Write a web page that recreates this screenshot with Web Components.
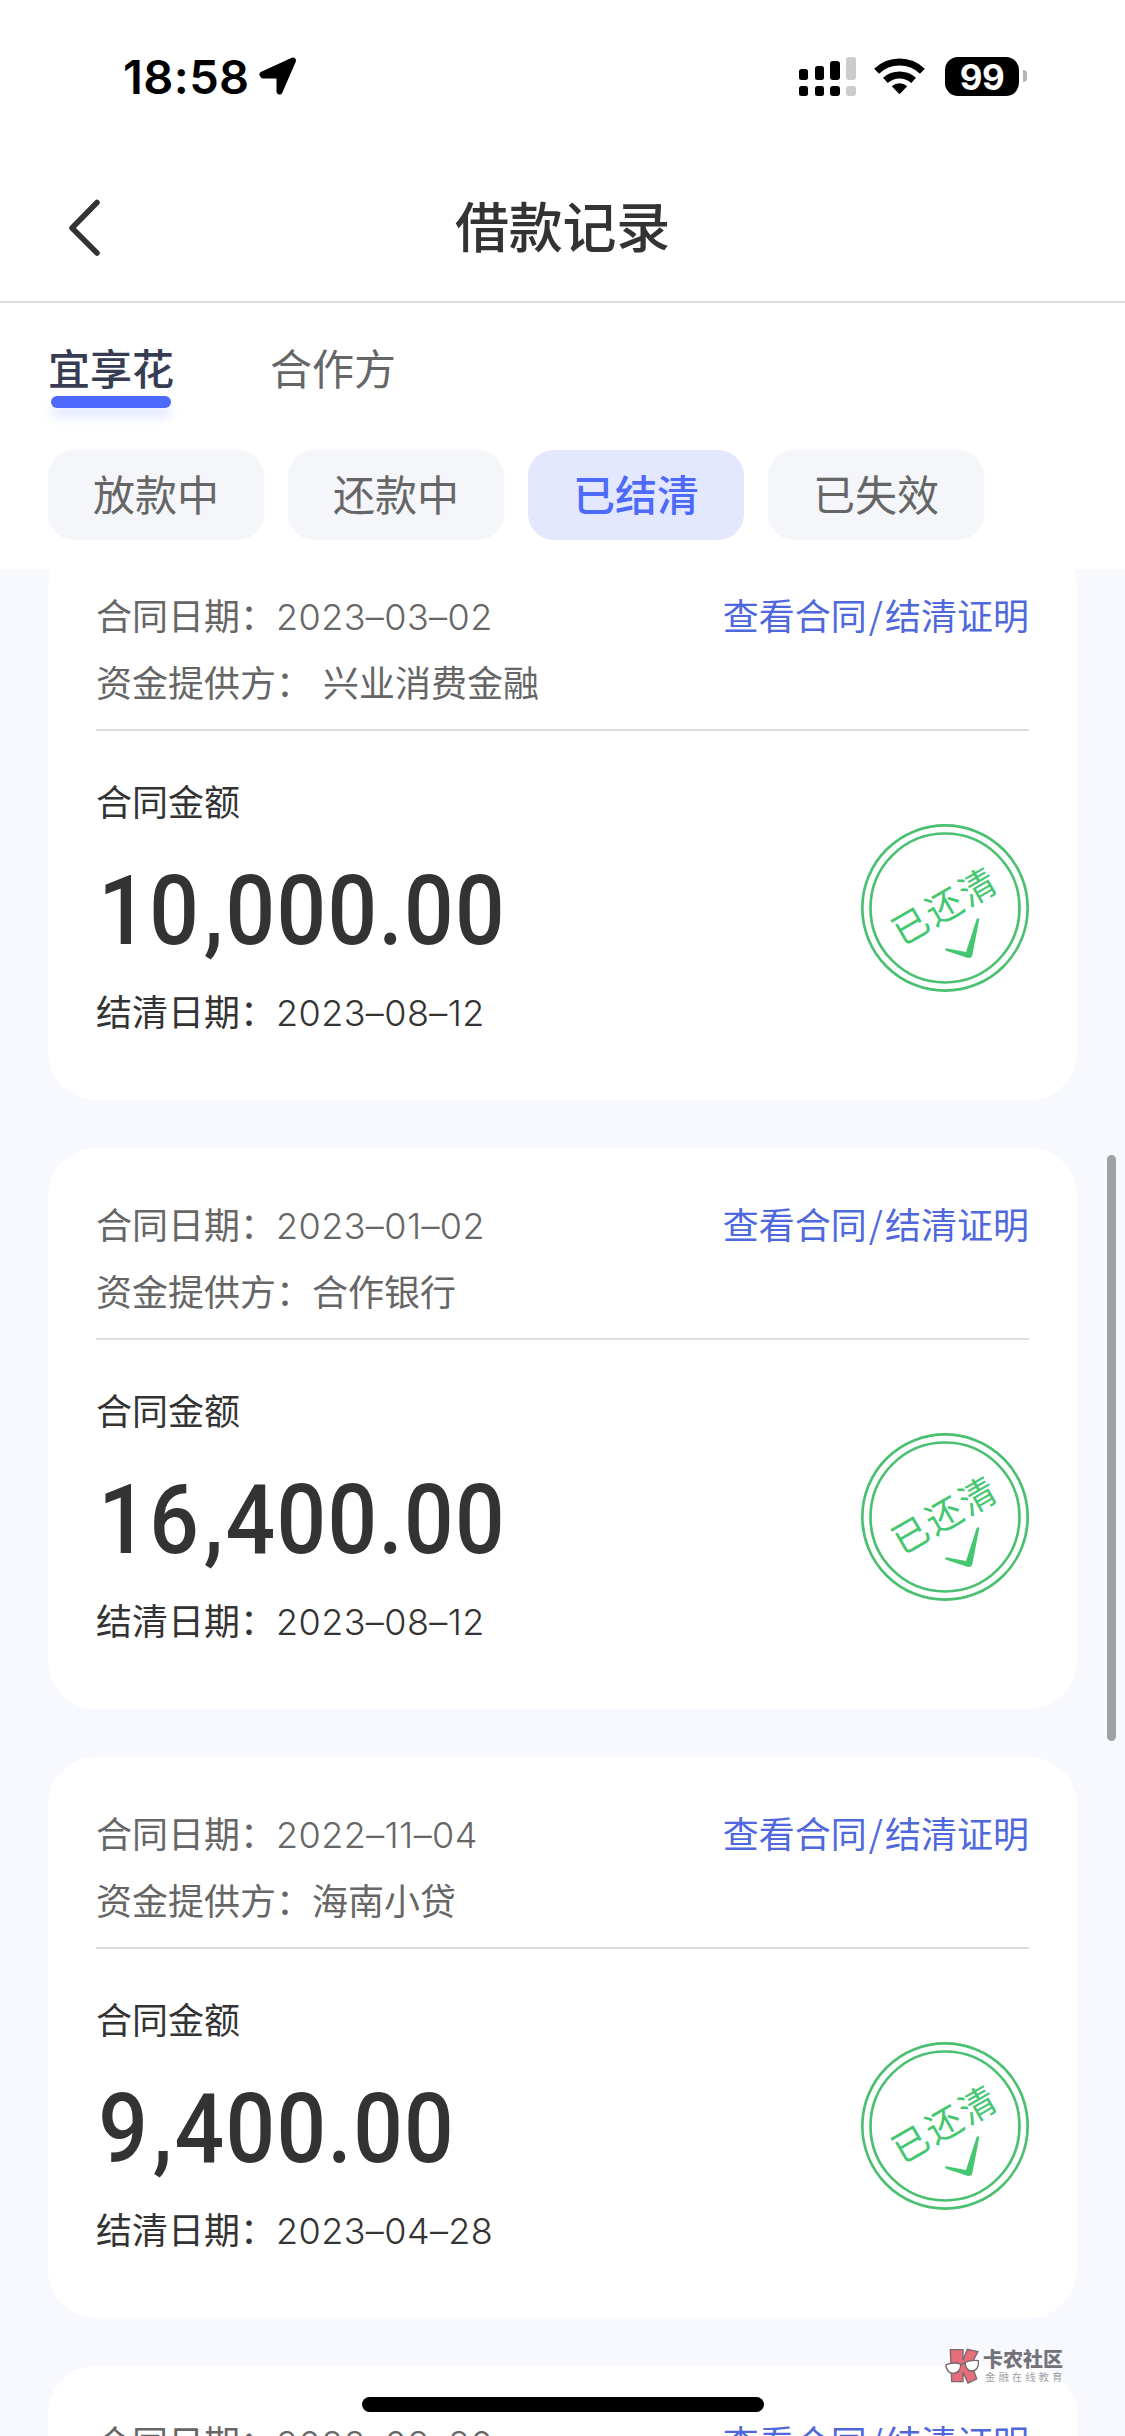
<!DOCTYPE html>
<html lang="zh-CN">
<head>
<meta charset="utf-8">
<title>借款记录</title>
<style>
html,body{margin:0;padding:0;background:#f8f9fe}
body{width:1125px;height:2436px;overflow:hidden;font-family:Inter,"Noto Sans CJK SC",sans-serif}
</style>
</head>
<body>
<loan-app></loan-app>
<script>
const define = (name, html, setup) => {
  const t = document.createElement('template');
  t.innerHTML = html;
  customElements.define(name, class extends HTMLElement {
    connectedCallback() {
      if (this.shadowRoot) return;
      const root = this.attachShadow({mode: 'open'});
      root.append(t.content.cloneNode(true));
      if (setup) setup(this, root);
    }
  });
};

define('status-bar', `
<style>
:host{display:flex;justify-content:space-between;align-items:center;height:152px;box-sizing:border-box;padding:0 98px 0 123px;color:#000}
.left,.right{display:flex;align-items:center}
.time{font:600 47px/60px Inter,sans-serif;letter-spacing:.4px;width:136px;white-space:nowrap;padding-top:2px}
.batt{display:flex;align-items:center;gap:4px;margin-left:20px}
.pct{width:74px;height:39px;border-radius:13px;background:#000;color:#fff;font:700 35px/40px Inter,sans-serif;letter-spacing:-.5px;text-align:center}
.nub{width:4px;height:12px;border-radius:0 4px 4px 0;background:#b5b5b5}
svg{display:block}
</style>
<div class="left"><span class="time">18:58</span>
<svg width="38" height="38" viewBox="0 0 38 38"><path d="M3.5 17.500 34 3.500 20.500 34.500V18.500H4Z" fill="#000" stroke="#000" stroke-width="6" stroke-linejoin="round"/></svg></div>
<div class="right">
<svg width="57" height="39" viewBox="0 0 57 39"><g fill="#000"><rect y="12" width="9" height="11" rx="2.5"/><rect x="16" y="9" width="9" height="14" rx="2.5"/><rect x="31" y="4" width="10" height="19" rx="3"/><rect y="29" width="9" height="10" rx="2.5"/><rect x="16" y="29" width="9" height="10" rx="2.5"/><rect x="31" y="29" width="10" height="10" rx="3"/></g><g fill="#ccc"><rect x="47" width="10" height="23" rx="3"/><rect x="47" y="29" width="10" height="10" rx="3"/></g></svg>
<svg width="51" height="39" viewBox="0 0 51 39" style="margin-left:18px"><g fill="none" stroke="#000" stroke-width="7"><path d="M2.6 14.3A33 33 0 0 1 48.4 14.3"/><path d="M11.4 23.4A21 21 0 0 1 39.6 23.4"/></g><path d="M17.800 29.200A11.500 11.500 0 0 1 33.200 29.200L26.500 36.200Q25.500 37.200 24.500 36.200Z"/></svg>
<div class="batt"><span class="pct">99</span><span class="nub"></span></div></div>`);

define('nav-bar', `
<style>
:host{display:grid;grid-template-columns:36px 1fr 36px;align-items:center;height:151px;box-sizing:border-box;padding:0 66px;border-bottom:2px solid #dcdcdc;color:#333}
h1{margin:0;padding-bottom:3px;text-align:center;font:500 54px/80px "Noto Sans CJK SC",sans-serif;letter-spacing:-.3px}
svg{display:block}
</style>
<svg width="36" height="58" viewBox="0 0 36 58"><path d="M31 4.500 6 30 31 55" fill="none" stroke="#333" stroke-width="5.500" stroke-linecap="round" stroke-linejoin="round"/></svg>
<h1><slot></slot></h1>`);

define('tab-item', `
<style>
:host{display:flex;flex-direction:column;align-items:center;color:#666;font:400 42px/60px "Noto Sans CJK SC",sans-serif}
:host([active]){color:#363d53;font-weight:500}
i{display:none;width:120px;height:12px;border-radius:6px;margin-top:-1px;background:#4e6afc;box-shadow:0 10px 10px rgba(78,106,252,.14)}
:host([active]) i{display:block}
</style><span><slot></slot></span><i></i>`);

define('filter-chip', `
<style>
:host{display:flex;justify-content:center;align-items:center;width:216px;height:90px;padding-bottom:4px;box-sizing:border-box;border-radius:26px;background:#f4f6fa;color:#666;font:400 42px/60px "Noto Sans CJK SC",sans-serif}
:host([active]){background:#e4e8fe;color:#4e6afc;font-weight:500}
</style><slot></slot>`);

define('paid-stamp', `
<style>:host{display:block;width:168px;height:168px}svg{display:block}text{font:400 108px "Noto Sans CJK SC",sans-serif}</style>
<svg width="168" height="168" viewBox="63 72 504 504"><g fill="none" stroke="#4bc071" stroke-width="8"><circle cx="315" cy="324" r="248"/><circle cx="315" cy="324" r="223.500"/></g>
<g transform="translate(311 318) rotate(-30)"><text x="4" y="41" text-anchor="middle" letter-spacing="8" fill="#45c772">已还清</text></g>
<path d="M318 445 378 456 410 357Q414 352 418 357L397 466Q395 475 384 474L318 452Q313 448 318 445Z" fill="#45c772"/></svg>`);

define('money-amount', `
<style>
:host{display:block;height:100px;font:500 97px/100px Roboto,sans-serif;color:#333;white-space:nowrap}
div{transform:scaleX(.9);transform-origin:0 50%;letter-spacing:1.500px;padding-left:2.500px}
.c{padding:0 1px 0 4px}
</style><div></div>`, (el, root) => {
  root.querySelector('div').innerHTML = el.getAttribute('value')
    .replace(/[,.]/g, m => '<span' + (m === ',' ? ' class="c"' : '') + '>' + m + '</span>');
});

define('loan-card', `
<style>
:host{display:flex;flex-direction:column;flex:none;height:561px;box-sizing:border-box;padding:48px 48px 0;border-radius:48px;background:#fff;color:#333;font:400 36px/54px "Noto Sans CJK SC",sans-serif}
.head{display:flex;justify-content:space-between;color:#666}
.link{color:#5068dd}
.link i{font-style:normal;padding:0 2px}
.src{margin-top:10px;color:#666;white-space:pre;word-spacing:3px}
.date{font-family:Inter,sans-serif;font-weight:300;letter-spacing:.4px}
hr{width:100%;border:0;height:2px;background:#dcdcdc;margin:21px 0 0}
.body{display:flex;justify-content:space-between;margin-top:42px}
.info{display:flex;flex-direction:column}
.amount{margin:34px 0 22px}
paid-stamp{margin-top:51px}
</style>
<div class="head"><div>合同日期：<span class="date" id="start"></span></div><div class="link">查看合同<i>/</i>结清证明</div></div>
<div class="src">资金提供方：<slot></slot></div>
<hr>
<div class="body"><div class="info"><div>合同金额</div><div class="amount"></div><div>结清日期：<span class="date" id="end"></span></div></div><paid-stamp></paid-stamp></div>`, (el, root) => {
  root.getElementById('start').textContent = el.getAttribute('start');
  if (!el.hasAttribute('amount')) {
    root.querySelectorAll('.src, hr, .body').forEach(n => n.remove());
    return;
  }
  root.getElementById('end').textContent = el.getAttribute('end');
  root.querySelector('.amount').innerHTML = '<money-amount value="' + el.getAttribute('amount') + '"></money-amount>';
});

define('site-mark', `
<style>
:host{display:flex;align-items:center;gap:4px}
svg{display:block}
b,span{display:block;white-space:nowrap;font-family:"Noto Sans CJK SC",sans-serif}
b{font-size:20px;line-height:20px;color:#737379;font-weight:900}
span{font-size:10.500px;line-height:14px;letter-spacing:2.900px;color:#a2a3a8;margin:1px 0 0 2px}
</style>
<svg width="34" height="36" viewBox="255 145 102 108"><path d="M271 150H309V182L322 149 354 156 334 192 350 238 324 250 309 218V246H275Z" fill="#e66e7b" stroke="#77686d" stroke-width="4"/><path d="M257 196Q279 186 302 193C302 213 292 221 279 221 265 221 260 211 257 196ZM315 188Q333 180 356 183C356 202 348 213 336 214 323 215 317 205 315 188Z" fill="#fff" stroke="#77686d" stroke-width="4"/><path d="M302 195 316 190" stroke="#77686d" stroke-width="4"/></svg>
<div><b>卡农社区</b><span>金融在线教育</span></div>`);

define('loan-app', `
<style>
:host{display:flex;flex-direction:column;position:relative;width:1125px;height:2436px;overflow:hidden;background:#f8f9fe}
.top{flex:none;height:569px;background:#fff;position:relative;z-index:1}
.tabs{display:flex;gap:96px;padding:34px 48px 0;height:76px}
.chips{display:flex;gap:24px;padding:37px 48px 0}
.list{display:flex;flex-direction:column;gap:48px;padding:0 48px;margin-top:-30px}
.bar{position:absolute;left:1107px;top:1155px;width:9px;height:586px;border-radius:5px;background:#a0a1a5}
.home{position:absolute;left:362px;top:2397px;width:402px;height:15px;border-radius:8px;background:#000}
site-mark{position:absolute;left:945px;top:2348px}
</style>
<div class="top"><status-bar></status-bar><nav-bar>借款记录</nav-bar>
<div class="tabs"><tab-item active>宜享花</tab-item><tab-item>合作方</tab-item></div>
<div class="chips"><filter-chip>放款中</filter-chip><filter-chip>还款中</filter-chip><filter-chip active>已结清</filter-chip><filter-chip>已失效</filter-chip></div></div>
<div class="list">
<loan-card start="2023–03–02" amount="10,000.00" end="2023–08–12">&nbsp;兴业消费金融</loan-card>
<loan-card start="2023–01–02" amount="16,400.00" end="2023–08–12">合作银行</loan-card>
<loan-card start="2022–11–04" amount="9,400.00" end="2023–04–28">海南小贷</loan-card>
<loan-card start="2022–08–20"></loan-card>
</div>
<div class="bar"></div><site-mark></site-mark><div class="home"></div>`);
</script>
</body>
</html>
